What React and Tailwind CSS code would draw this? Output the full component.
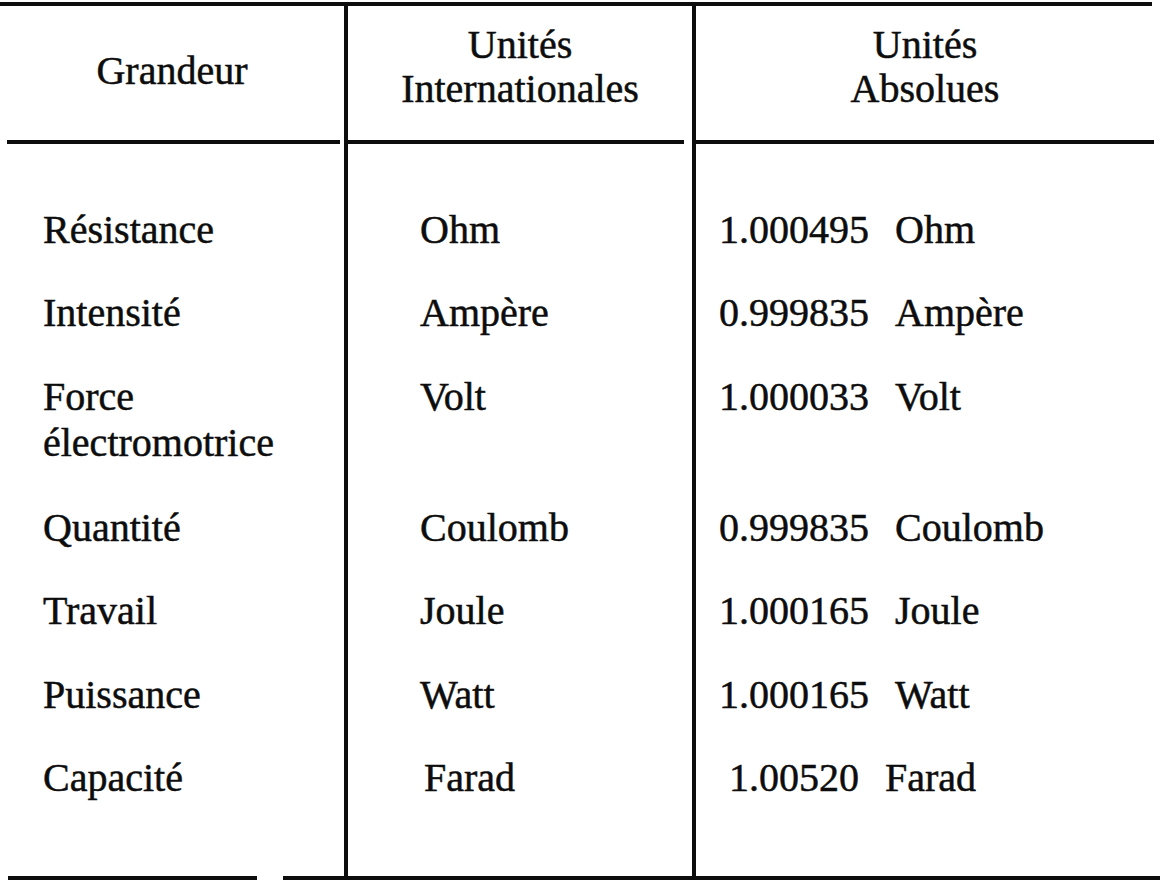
import React from 'react';

const rows = [
  { name: ['Résistance'], intl: 'Ohm', abs: '1.000495', unit: 'Ohm', h: 'h-[83.5px]' },
  { name: ['Intensité'], intl: 'Ampère', abs: '0.999835', unit: 'Ampère', h: 'h-[83.5px]' },
  { name: ['Force', 'électromotrice'], intl: 'Volt', abs: '1.000033', unit: 'Volt', h: 'h-[131px]' },
  { name: ['Quantité'], intl: 'Coulomb', abs: '0.999835', unit: 'Coulomb', h: 'h-[83.5px]' },
  { name: ['Travail'], intl: 'Joule', abs: '1.000165', unit: 'Joule', h: 'h-[83.5px]' },
  { name: ['Puissance'], intl: 'Watt', abs: '1.000165', unit: 'Watt', h: 'h-[83.5px]' },
  { name: ['Capacité'], intl: 'Farad', abs: '1.00520', unit: 'Farad', h: 'h-[83.5px]', shift: true },
];

const App = () => {
  return (
    <div
      className="w-[1160px] h-[885px] bg-white text-[#0d0d0d] text-[40px] leading-[46px] overflow-hidden [-webkit-text-stroke:0.5px_#0d0d0d]"
      style={{ fontFamily: '"Liberation Serif", "Times New Roman", serif' }}
    >
      {/* top rule */}
      <div className="mt-[2px] mr-[8px] h-[4px] bg-[#0d0d0d]" />

      <div className="grid grid-cols-[344px_4px_344px_4px_1fr]">
        {/* vertical rules */}
        <div className="col-start-2 row-start-1 row-span-3 bg-[#0d0d0d]" />
        <div className="col-start-4 row-start-1 row-span-3 bg-[#0d0d0d]" />

        {/* header */}
        <div className="col-start-1 row-start-1 h-[134px] pt-[42px] text-center">Grandeur</div>
        <div className="col-start-3 row-start-1 h-[134px] pt-[17px] leading-[44px] text-center">
          <div>Unités</div>
          <div>Internationales</div>
        </div>
        <div className="col-start-5 row-start-1 h-[134px] pt-[17px] pr-[6px] leading-[44px] text-center">
          <div>Unités</div>
          <div>Absolues</div>
        </div>

        {/* header rule, broken at the columns */}
        <div className="col-start-1 row-start-2 h-[4px] ml-[7px] mr-[4px] bg-[#0d0d0d]" />
        <div className="col-start-3 row-start-2 h-[4px] mr-[8px] bg-[#0d0d0d]" />
        <div className="col-start-5 row-start-2 h-[4px] mr-[6px] bg-[#0d0d0d]" />

        {/* body */}
        <div className="col-start-1 row-start-3 h-[732px] pt-[62.5px] pl-[43px]">
          {rows.map((r) => (
            <div key={r.name[0]} className={r.h}>
              {r.name.map((n) => (
                <div key={n}>{n}</div>
              ))}
            </div>
          ))}
        </div>
        <div className="col-start-3 row-start-3 pt-[62.5px] pl-[72px]">
          {rows.map((r) => (
            <div key={r.intl} className={`${r.h} ${r.shift ? 'pl-[4px]' : ''}`}>
              {r.intl}
            </div>
          ))}
        </div>
        <div className="col-start-5 row-start-3 pt-[62.5px] pl-[23px]">
          {rows.map((r) => (
            <div key={r.unit} className={`${r.h} flex ${r.shift ? 'pl-[10px]' : ''}`}>
              <span>{r.abs}</span>
              <span className="ml-[26px]">{r.unit}</span>
            </div>
          ))}
        </div>
      </div>

      {/* bottom rule */}
      <div className="flex h-[4px]">
        <div className="ml-[8px] w-[249px] bg-[#0d0d0d]" />
        <div className="ml-[26px] flex-1 bg-[#0d0d0d]" />
      </div>
    </div>
  );
};

export default App;
